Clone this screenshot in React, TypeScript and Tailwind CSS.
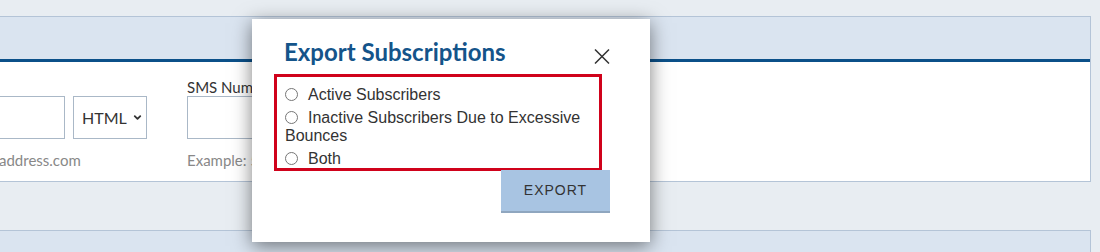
import { ChevronDown } from "lucide-react";

const options = [
    "Active Subscribers",
    "Inactive Subscribers Due to Excessive Bounces",
    "Both",
];

const ExportModal = () => {
    return (
        <div className="absolute left-[252px] top-[19px] w-[398px] h-[223px] bg-white shadow-[0_4px_18px_rgba(0,0,0,0.5)] pt-[19px]">
            <div className="flex items-start justify-between pl-[32px] pr-[40px]">
                <h2 className="font-['Lato',sans-serif] font-bold text-[24px] leading-[28px] text-[#14548a]">
                    Export Subscriptions
                </h2>
                {/* close icon */}
                <button className="mt-[11px] text-[#333]">
                    <svg width="16" height="15" viewBox="0 0 16 15" fill="none" stroke="currentColor" strokeWidth="1.5">
                        <path d="M1 0.5 L15 14.5 M15 0.5 L1 14.5" />
                    </svg>
                </button>
            </div>
            <div className="ml-[22px] mt-[8px] w-[328px] border-[3px] border-[#d0021b] pt-[9px] pb-0 pl-[8px] pr-[6px] flex flex-col gap-[5px] font-['Liberation_Sans',Arial,sans-serif] text-[16px] leading-[18px] text-[#333]">
                {options.map((opt) => (
                    <label key={opt} className="block">
                        <span className="inline-block w-[13px] h-[13px] rounded-full border border-[#767676] bg-white mr-[10px] align-[-1px]"></span>
                        {opt}
                    </label>
                ))}
            </div>
            <div className="flex justify-end pr-[40px] -mt-px">
                <button className="w-[109px] h-[43px] bg-[#a8c4e2] border-b-2 border-[#8fa6bf] font-['Liberation_Sans',Arial,sans-serif] text-[14px] tracking-[1px] text-[#333]">
                    EXPORT
                </button>
            </div>
        </div>
    );
};

const App = () => {
    return (
        <div className="relative w-[1100px] h-[252px] overflow-hidden bg-[#e8edf2] pt-[16px] font-['Lato',sans-serif]">
            <div className="-ml-[2px] mr-[9px] border border-[#b4c4d7]">
                <div className="h-[45px] bg-[#dae4f0] border-b-[3px] border-[#0b5089]"></div>
                <div className="h-[119px] bg-white pt-[16px] flex">
                    <div className="-ml-[118px] flex flex-col">
                        <div className="h-[18px]"></div>
                        <div className="flex gap-[8px]">
                            <div className="w-[184px] h-[43px] border border-[#aab8c7]"></div>
                            <div className="w-[74px] h-[43px] border border-[#aab8c7] flex items-center pl-[8px] gap-[5px] text-[16px] text-[#333]">
                                HTML
                                <ChevronDown size={11} strokeWidth={4} />
                            </div>
                        </div>
                        <p className="mt-[10px] ml-[6px] text-[15px] text-[#888]">Example: name@address.com</p>
                    </div>
                    <div className="ml-[40px] flex flex-col">
                        <span className="h-[18px] text-[15px] leading-[18px] text-[#333]">SMS Number</span>
                        <div className="w-[200px] h-[43px] border border-[#aab8c7]"></div>
                        <p className="mt-[10px] text-[15px] text-[#888]">Example: 5551234567</p>
                    </div>
                </div>
            </div>
            <div className="-ml-[2px] mr-[9px] mt-[48px] h-[40px] border border-[#b4c4d7] bg-[#dae4f0]"></div>
            <ExportModal />
        </div>
    );
};

export default App;
